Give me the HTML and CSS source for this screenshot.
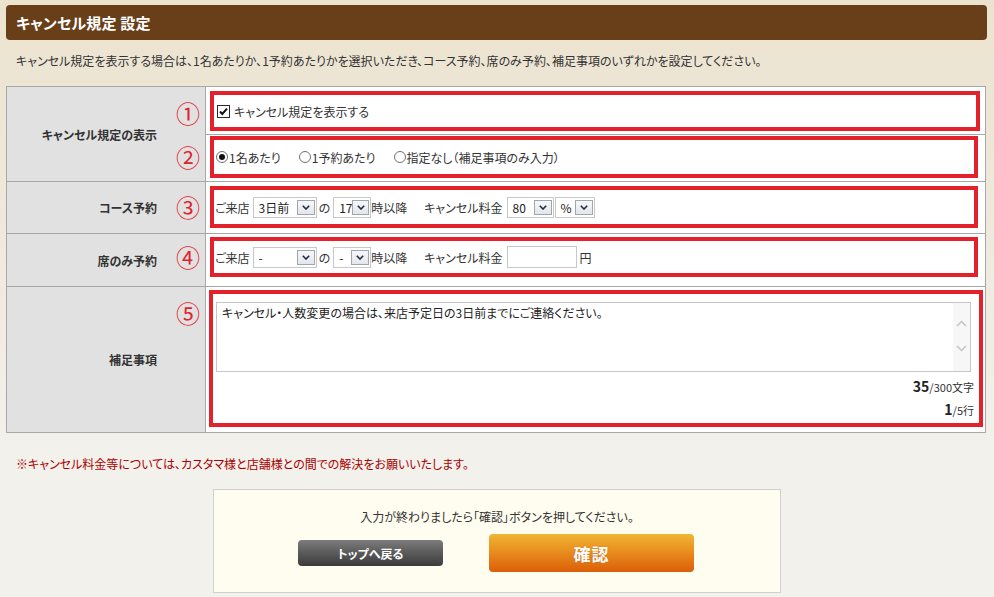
FILE: index.html
```html
<!DOCTYPE html>
<html lang="ja">
<head>
<meta charset="utf-8">
<title>キャンセル規定 設定</title>
<link rel="stylesheet" href="styles.css">
</head>
<body>
<div class="page">
  <h1 class="title-bar">キャンセル規定 設定</h1>
  <p class="intro">キャンセル規定を表示する場合は、1名あたりか、1予約あたりかを選択いただき、コース予約、席のみ予約、補足事項のいずれかを設定してください。</p>

  <div class="form-grid">
    <div class="label label-span">キャンセル規定の表示<span class="num num-1">①</span><span class="num num-2">②</span></div>
    <div class="field">
      <div class="mark mark-1">
        <span class="checkbox"><svg width="11" height="11" viewBox="0 0 11 11"><path d="M2 5.5 L4.3 8 L9 2.6" fill="none" stroke="#111" stroke-width="2"/></svg></span>
        <span class="check-label">キャンセル規定を表示する</span>
      </div>
    </div>
    <div class="field">
      <div class="mark mark-2">
        <span class="radio-item"><span class="radio radio-on"></span>1名あたり</span>
        <span class="radio-item"><span class="radio"></span>1予約あたり</span>
        <span class="radio-item"><span class="radio"></span>指定なし（補足事項のみ入力）</span>
      </div>
    </div>

    <div class="label">コース予約<span class="num num-3">③</span></div>
    <div class="field">
      <div class="mark mark-3">
        <span class="txt">ご来店</span>
        <span class="select sel-day">3日前<span class="arrow"><svg width="8" height="5" viewBox="0 0 8 5"><path d="M0.8 0.8 L4 4 L7.2 0.8" fill="none" stroke="#1d2a48" stroke-width="1.6"/></svg></span></span>
        <span class="txt txt-no">の</span>
        <span class="select sel-hour">17<span class="arrow"><svg width="8" height="5" viewBox="0 0 8 5"><path d="M0.8 0.8 L4 4 L7.2 0.8" fill="none" stroke="#1d2a48" stroke-width="1.6"/></svg></span></span>
        <span class="txt">時以降</span>
        <span class="txt txt-fee">キャンセル料金</span>
        <span class="select sel-rate">80<span class="arrow"><svg width="8" height="5" viewBox="0 0 8 5"><path d="M0.8 0.8 L4 4 L7.2 0.8" fill="none" stroke="#1d2a48" stroke-width="1.6"/></svg></span></span>
        <span class="select sel-unit">%<span class="arrow"><svg width="8" height="5" viewBox="0 0 8 5"><path d="M0.8 0.8 L4 4 L7.2 0.8" fill="none" stroke="#1d2a48" stroke-width="1.6"/></svg></span></span>
      </div>
    </div>

    <div class="label">席のみ予約<span class="num num-4">④</span></div>
    <div class="field">
      <div class="mark mark-4">
        <span class="txt">ご来店</span>
        <span class="select sel-day">-<span class="arrow"><svg width="8" height="5" viewBox="0 0 8 5"><path d="M0.8 0.8 L4 4 L7.2 0.8" fill="none" stroke="#1d2a48" stroke-width="1.6"/></svg></span></span>
        <span class="txt txt-no">の</span>
        <span class="select sel-hour">-<span class="arrow"><svg width="8" height="5" viewBox="0 0 8 5"><path d="M0.8 0.8 L4 4 L7.2 0.8" fill="none" stroke="#1d2a48" stroke-width="1.6"/></svg></span></span>
        <span class="txt">時以降</span>
        <span class="txt txt-fee">キャンセル料金</span>
        <span class="text-input"></span>
        <span class="txt txt-yen">円</span>
      </div>
    </div>

    <div class="label">補足事項<span class="num num-5">⑤</span></div>
    <div class="field">
      <div class="mark mark-5">
        <div class="textarea">
          <div class="textarea-text">キャンセル・人数変更の場合は、来店予定日の3日前までにご連絡ください。</div>
          <div class="scrollbar">
            <svg width="11" height="7" viewBox="0 0 11 7"><path d="M1 6 L5.5 1.5 L10 6" fill="none" stroke="#c4c4c4" stroke-width="1.5"/></svg>
            <svg width="11" height="7" viewBox="0 0 11 7"><path d="M1 1 L5.5 5.5 L10 1" fill="none" stroke="#c4c4c4" stroke-width="1.5"/></svg>
          </div>
        </div>
        <div class="counter"><b>35</b>/300文字</div>
        <div class="counter"><b>1</b>/5行</div>
      </div>
    </div>
  </div>

  <p class="note">※キャンセル料金等については、カスタマ様と店舗様との間での解決をお願いいたします。</p>

  <div class="confirm-box">
    <p class="confirm-text">入力が終わりましたら「確認」ボタンを押してください。</p>
    <div class="buttons">
      <button class="btn btn-back" type="button">トップへ戻る</button>
      <button class="btn btn-confirm" type="button">確認</button>
    </div>
  </div>
</div>
</body>
</html>
```

FILE: styles.css
```css
* { box-sizing: border-box; }

html, body {
  margin: 0;
  padding: 0;
}

body {
  width: 994px;
  height: 597px;
  overflow: hidden;
  background: linear-gradient(180deg, #ece3cf 0px, #efe9dc 220px, #f3f1ec 460px, #f3f1ec 597px);
  font-family: "Noto Sans CJK JP", "Noto Sans", sans-serif;
  font-size: 12px;
  color: #333;
  font-feature-settings: "palt";
}

.page {
  padding: 5px 0 0 6px;
}

.title-bar {
  width: 981px;
  height: 35px;
  margin: 0;
  padding: 0 0 0 10px;
  background: #683f19;
  border-radius: 4px;
  color: #fff;
  font-size: 15px;
  font-weight: bold;
  line-height: 35px;
  letter-spacing: 0.2px;
}

.intro {
  margin: 12px 0 16px;
  padding-left: 10px;
  line-height: 18px;
  font-size: 12px;
  color: #333;
}

.form-grid {
  display: grid;
  width: 980px;
  grid-template-columns: 198px 1fr;
  grid-template-rows: 47px 46px 51px 52px 145px;
  gap: 1px;
  background: #a8a8a8;
  border: 1px solid #a8a8a8;
}

.label {
  position: relative;
  display: flex;
  align-items: center;
  justify-content: flex-end;
  padding-right: 48px;
  background: #e1e1e1;
  font-weight: bold;
  font-size: 12px;
  color: #333;
}

.label-span {
  grid-row: span 2;
}

.num {
  position: absolute;
  right: 5px;
  font-size: 24px;
  line-height: 24px;
  font-weight: normal;
  color: #e3212b;
}
.num-1 { top: 14px; }
.num-2 { top: 58px; }
.num-3 { top: 13px; }
.num-4 { top: 11px; }
.num-5 { top: 14px; }

.field {
  background: #fff;
  min-width: 0;
}

.mark {
  border: 4px solid #e3212b;
  display: flex;
  align-items: center;
}

.mark-1 { margin: 4px 5px 0 4px; height: 40px; padding-left: 3px; }
.mark-2 { margin: 1px 7px 0 4px; height: 42px; padding-left: 2px; }
.mark-3 { margin: 4px 7px 0 4px; height: 42px; padding-left: 1px; }
.mark-4 { margin: 3px 7px 0 4px; height: 40px; padding-left: 1px; }
.mark-5 {
  margin: 3px 2px 0 3px;
  height: 137px;
  padding: 8px 5px 0 3px;
  display: block;
}

.checkbox {
  width: 13px;
  height: 13px;
  border: 1px solid #2a2a2a;
  background: #fff;
  display: inline-flex;
  align-items: center;
  justify-content: center;
}

.check-label {
  margin-left: 4px;
}

.radio-item {
  display: inline-flex;
  align-items: center;
  margin-right: 18px;
}

.radio {
  width: 12px;
  height: 12px;
  border: 1px solid #707070;
  border-radius: 50%;
  background: #fff;
  margin-right: 1px;
  position: relative;
  display: inline-flex;
  align-items: center;
  justify-content: center;
}

.radio-on::after {
  content: "";
  width: 6px;
  height: 6px;
  border-radius: 50%;
  background: #111;
}

.txt { white-space: nowrap; }
.txt-no { margin: 0 3px 0 2px; }
.txt-fee { margin: 0 1px 0 17px; }
.txt-yen { margin-left: 3px; }

.select {
  display: inline-flex;
  align-items: center;
  justify-content: space-between;
  height: 21px;
  border: 1px solid #c8c8c8;
  background: #fff;
  padding: 0 1px 0 5px;
  margin-left: 3px;
  font-size: 12px;
  color: #222;
}

.sel-day { width: 64px; }
.sel-hour { width: 38px; margin-left: 0; }
.sel-rate { width: 47px; }
.sel-unit { width: 40px; margin-left: 1px; }

.arrow {
  width: 18px;
  height: 15px;
  border: 1px solid #9ea6b0;
  background: linear-gradient(180deg, #f6f7f9, #e3e6ea);
  display: inline-flex;
  align-items: center;
  justify-content: center;
}

.text-input {
  width: 70px;
  height: 22px;
  border: 1px solid #c8c8c8;
  background: #fff;
  margin-left: 3px;
}

.textarea {
  display: flex;
  width: 755px;
  height: 70px;
  border: 1px solid #c6c6c6;
  background: #fff;
}

.textarea-text {
  flex: 1;
  padding: 2px 0 0 5px;
  line-height: 16px;
  color: #222;
}

.scrollbar {
  width: 17px;
  background: #f7f7f7;
  display: flex;
  flex-direction: column;
  align-items: center;
  padding-top: 17px;
  gap: 18px;
}

.counter {
  text-align: right;
  line-height: 22px;
  font-size: 11px;
  color: #333;
}
.textarea + .counter { margin-top: 3px; }

.counter b {
  font-size: 14px;
  font-weight: bold;
  color: #222;
}

.note {
  margin: 22px 0 16px;
  padding-left: 10px;
  line-height: 18px;
  color: #a80000;
}

.confirm-box {
  width: 568px;
  height: 104px;
  margin-left: 207px;
  background: #fffdf0;
  border: 1px solid #d0d0d0;
  padding-top: 18px;
}

.confirm-text {
  margin: 0;
  text-align: center;
  line-height: 18px;
  color: #333;
}

.buttons {
  margin-top: 8px;
  display: flex;
  justify-content: center;
  align-items: center;
  gap: 46px;
  padding-right: 2px;
}

.btn {
  border: none;
  color: #fff;
  font-family: "Noto Sans CJK JP", "Noto Sans", sans-serif;
  font-weight: bold;
  font-feature-settings: "palt";
  padding: 0;
  cursor: pointer;
}

.btn-back {
  width: 145px;
  height: 26px;
  border-radius: 4px;
  background: linear-gradient(180deg, #7c7c7c 0%, #5a5a5a 50%, #3b3b3b 100%);
  font-size: 12px;
}

.btn-confirm {
  width: 205px;
  height: 38px;
  border-radius: 4px;
  background: linear-gradient(180deg, #f0b534 0%, #e88a1c 50%, #db5e08 100%);
  font-size: 17px;
  letter-spacing: 1px;
  text-shadow: 0 0 1px rgba(120, 50, 0, 0.4);
}
```
